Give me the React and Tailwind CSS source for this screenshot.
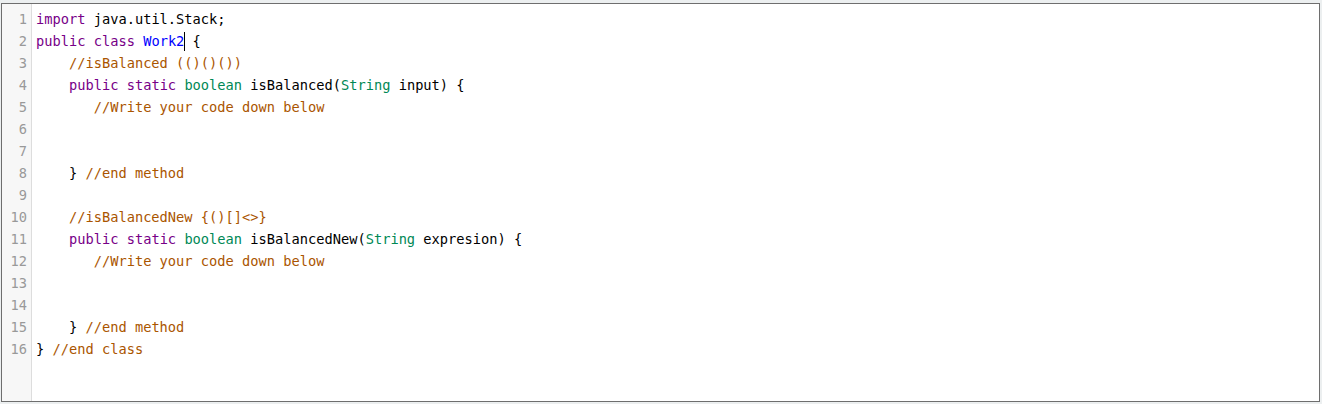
import React from "react";

const K = ({ children }) => <span className="text-[#770088]">{children}</span>;
const T = ({ children }) => <span className="text-[#008855]">{children}</span>;
const D = ({ children }) => <span className="text-[#0000ff]">{children}</span>;
const C = ({ children }) => <span className="text-[#aa5500]">{children}</span>;

const lines = [
  <>
    <K>import</K> java.util.Stack;
  </>,
  <>
    <K>public</K> <K>class</K> <D>Work2</D>
    <span className="relative inline-block w-0 h-[19px] align-[-5px]">
      <span className="absolute left-0 top-0 h-[19px] w-px bg-black" />
    </span>{" "}
    {"{"}
  </>,
  <>
    {"    "}
    <C>//isBalanced (()()())</C>
  </>,
  <>
    {"    "}
    <K>public</K> <K>static</K> <T>boolean</T> isBalanced(<T>String</T> input) {"{"}
  </>,
  <>
    {"       "}
    <C>//Write your code down below</C>
  </>,
  <>{""}</>,
  <>{""}</>,
  <>
    {"    } "}
    <C>//end method</C>
  </>,
  <>{""}</>,
  <>
    {"    "}
    <C>{"//isBalancedNew {()[]<>}"}</C>
  </>,
  <>
    {"    "}
    <K>public</K> <K>static</K> <T>boolean</T> isBalancedNew(<T>String</T> expresion) {"{"}
  </>,
  <>
    {"       "}
    <C>//Write your code down below</C>
  </>,
  <>{""}</>,
  <>{""}</>,
  <>
    {"    } "}
    <C>//end method</C>
  </>,
  <>
    {"} "}
    <C>//end class</C>
  </>,
];

export default function App() {
  return (
    <div className="w-[1322px] h-[404px] bg-[#eceff0] pt-[3px] pl-[1px] overflow-hidden">
      <div
        className="w-[1319px] h-[399px] border border-[#6e6e6e] bg-white flex text-[13.7px]"
        style={{ fontFamily: '"DejaVu Sans Mono", monospace' }}
      >
        <div className="w-[30px] shrink-0 bg-[#f7f7f7] border-r border-[#dddddd] pt-[4px]">
          {lines.map((_, i) => (
            <div key={i} className="h-[22px] leading-[22px] text-right pr-[4px] text-[#999999]">
              {i + 1}
            </div>
          ))}
        </div>
        <div className="flex-1 pt-[4px] pl-[4px]">
          {lines.map((l, i) => (
            <div key={i} className="h-[22px] leading-[22px] whitespace-pre text-black">
              {l}
            </div>
          ))}
        </div>
      </div>
    </div>
  );
}
